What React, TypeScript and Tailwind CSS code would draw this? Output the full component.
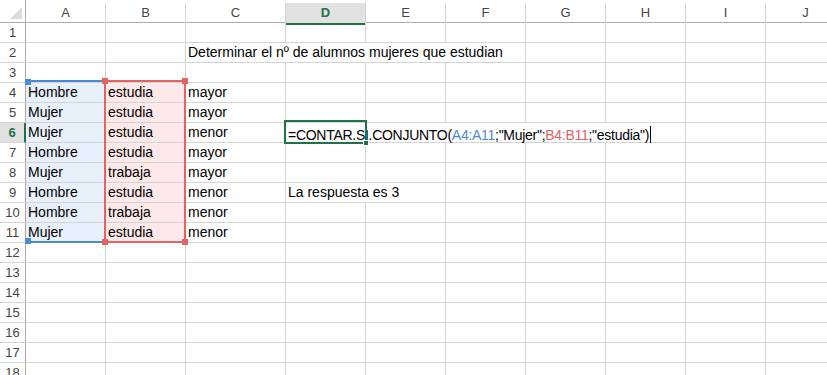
import type { ReactNode } from 'react';

const columns = [
  { name: 'A', width: 80 },
  { name: 'B', width: 80 },
  { name: 'C', width: 100 },
  { name: 'D', width: 80 },
  { name: 'E', width: 80 },
  { name: 'F', width: 80 },
  { name: 'G', width: 80 },
  { name: 'H', width: 80 },
  { name: 'I', width: 80 },
  { name: 'J', width: 80 }
];

const people = [
  ['Hombre', 'estudia', 'mayor'],
  ['Mujer', 'estudia', 'mayor'],
  ['Mujer', 'estudia', 'menor'],
  ['Hombre', 'estudia', 'mayor'],
  ['Mujer', 'trabaja', 'mayor'],
  ['Hombre', 'estudia', 'menor'],
  ['Hombre', 'trabaja', 'menor'],
  ['Mujer', 'estudia', 'menor']
];

const formula = (
  <span className="tracking-[-0.28px]">
    =CONTAR.SI.CONJUNTO(
    <span className="text-[#4a8bd6]">A4:A11</span>
    ;"Mujer";
    <span className="text-[#e26363]">B4:B11</span>
    ;"estudia")
    <span className="ml-px inline-block h-[17px] w-px translate-y-[3px] bg-black" />
  </span>
);

// text that spills over the cells to its right, hiding their gridlines
const Spill = ({ children }: { children: ReactNode }) => (
  <span className="relative z-10 h-[19px] whitespace-nowrap bg-white pr-[1px]">{children}</span>
);

const cellContent = (row: number, col: number): ReactNode => {
  if (row === 2 && col === 2) return <Spill>Determinar el nº de alumnos mujeres que estudian</Spill>;
  if (row === 6 && col === 3) return <Spill>{formula}</Spill>;
  if (row === 9 && col === 3) return <Spill>La respuesta es 3</Spill>;
  if (row >= 4 && row <= 11 && col <= 2) return people[row - 4][col];
  return null;
};

const cellFill = (row: number, col: number) => {
  if (row >= 4 && row <= 11 && col === 0) return 'bg-[#e8f0fb]';
  if (row >= 4 && row <= 11 && col === 1) return 'bg-[#fde9e9]';
  return '';
};

const Handle = ({ className }: { className: string }) => (
  <span className={`absolute h-[6px] w-[6px] ${className}`} />
);

const Corner = () => (
  <div className="flex h-[23px] w-[26px] shrink-0 items-end justify-end border-b border-r border-[#ababab] bg-white p-[3px]">
    <svg width="12" height="12" viewBox="0 0 12 12">
      <polygon points="12,0 12,12 0,12" fill="#dcdcdc" />
    </svg>
  </div>
);

export default function App() {
  const rows = Array.from({ length: 18 }, (_, i) => i + 1);

  return (
    <div
      className="relative h-[375px] w-[827px] overflow-hidden bg-white text-[14px] text-black"
      style={{ fontFamily: '"Liberation Sans", Arial, sans-serif' }}
    >
      {/* column headers */}
      <div className="flex">
        <Corner />
        {columns.map((c) => {
          const active = c.name === 'D';
          return (
            <div
              key={c.name}
              style={{ width: c.width }}
              className="flex h-[23px] shrink-0 flex-col border-b border-[#ababab] pt-[3px]"
            >
              <div
                className={`flex flex-1 items-center justify-center border-r border-[#d4d4d4] text-[13px] ${
                  active
                    ? 'border-b-2 border-b-[#217346] bg-[#e1e1e1] font-bold text-[#217346]'
                    : 'text-[#444]'
                }`}
              >
                {c.name}
              </div>
            </div>
          );
        })}
      </div>

      {/* body rows */}
      {rows.map((r) => {
        const active = r === 6;
        return (
          <div key={r} className="flex">
            <div
              className={`flex h-[20px] w-[26px] shrink-0 items-center justify-center border-b border-[#d4d4d4] text-[13px] ${
                active
                  ? 'border-r-2 border-r-[#217346] bg-[#e1e1e1] font-bold text-[#217346]'
                  : 'border-r border-r-[#ababab] text-[#444]'
              }`}
            >
              {r}
            </div>
            {columns.map((c, ci) => (
              <div
                key={c.name}
                style={{ width: c.width }}
                className={`flex h-[20px] shrink-0 items-start overflow-visible border-b border-r border-[#d4d4d4] pl-[2px] leading-[19px] ${cellFill(r, ci)}`}
              >
                {cellContent(r, ci)}
              </div>
            ))}
          </div>
        );
      })}

      {/* A4:A11 reference highlight */}
      <div className="absolute left-[26px] top-[80px] z-20 h-[163px] w-[79px] border-y-2 border-[#4a8bd6]">
        <Handle className="-left-[1px] -top-[3px] w-[3px] bg-[#4a8bd6]" />
        <Handle className="-bottom-[3px] -left-[1px] w-[3px] bg-[#4a8bd6]" />
      </div>

      {/* B4:B11 reference highlight */}
      <div className="absolute left-[104px] top-[80px] z-20 h-[163px] w-[82px] border-2 border-[#e26363]">
        <Handle className="-left-[4px] -top-[4px] bg-[#e26363]" />
        <Handle className="-right-[4px] -top-[4px] bg-[#e26363]" />
        <Handle className="-bottom-[4px] -left-[4px] bg-[#e26363]" />
        <Handle className="-bottom-[4px] -right-[4px] bg-[#e26363]" />
      </div>

      {/* active cell D6 */}
      <div className="absolute left-[284px] top-[120px] z-30 h-[24px] w-[83px] border-2 border-[#217346]">
        <span className="absolute -bottom-[4px] -right-[4px] h-[6px] w-[6px] border border-white bg-[#217346]" />
      </div>
    </div>
  );
}
